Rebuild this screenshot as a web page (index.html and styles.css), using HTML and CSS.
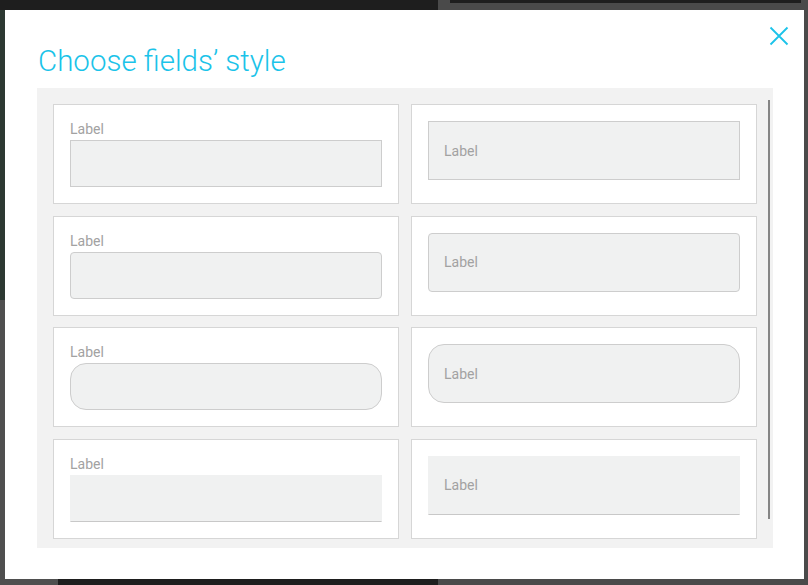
FILE: index.html
```html
<!DOCTYPE html>
<html lang="en">
<head>
<meta charset="utf-8">
<title>Choose fields’ style</title>
<link rel="stylesheet" href="styles.css">
</head>
<body>
<div class="dialog">
  <button class="close" aria-label="Close">
    <svg width="20" height="20" viewBox="0 0 20 20"><path d="M1.5 1.5 L18.5 18.5 M18.5 1.5 L1.5 18.5" stroke="#1bc3e9" stroke-width="1.8" fill="none"/></svg>
  </button>
  <h1 class="title">Choose fields’ style</h1>
  <div class="panel">
    <div class="grid">
      <div class="card"><div class="top-label">Label</div><div class="field f-square"></div></div>
      <div class="card"><div class="field tall f-square"><span class="in-label">Label</span></div></div>
      <div class="card"><div class="top-label">Label</div><div class="field f-rounded"></div></div>
      <div class="card"><div class="field tall f-rounded"><span class="in-label">Label</span></div></div>
      <div class="card"><div class="top-label">Label</div><div class="field f-pill"></div></div>
      <div class="card"><div class="field tall f-pill"><span class="in-label">Label</span></div></div>
      <div class="card"><div class="top-label">Label</div><div class="field f-line"></div></div>
      <div class="card"><div class="field tall f-line"><span class="in-label">Label</span></div></div>
    </div>
    <div class="scrollbar"></div>
  </div>
</div>
</body>
</html>
```
FILE: styles.css
```css
html, body {
  margin: 0;
  height: 100%;
}
body {
  box-sizing: border-box;
  padding: 10px 0 0 5px;
  font-family: Roboto, "Noto Sans", Arial, sans-serif;
  background:
    linear-gradient(#1e1e1e, #1e1e1e) 450px 0 / 351px 3px no-repeat,
    linear-gradient(#4a4a4a, #4a4a4a) 438px 0 / 370px 585px no-repeat,
    linear-gradient(#2d3932, #2d3932) 0 10px / 5px 290px no-repeat,
    linear-gradient(#4f4f4f, #4f4f4f) 0 300px / 58px 285px no-repeat,
    #1e1e1e;
  overflow: hidden;
}
.dialog {
  position: relative;
  box-sizing: border-box;
  width: 799px;
  height: 569px;
  background: #fff;
  padding: 34px 31px 31px 32px;
}
.close {
  position: absolute;
  top: 16px;
  right: 15px;
  width: 20px;
  height: 20px;
  padding: 0;
  border: 0;
  background: none;
  display: block;
}
.close svg { display: block; }
.title {
  margin: 0 0 10px 1px;
  font-size: 29.5px;
  line-height: 34px;
  font-weight: 300;
  color: #1bc3e9;
  letter-spacing: 0;
}
.panel {
  box-sizing: border-box;
  width: 736px;
  height: 460px;
  background: #f2f2f2;
  display: flex;
  padding: 16px 3px 11px 16px;
}
.grid {
  display: grid;
  grid-template-columns: 346px 346px;
  grid-auto-rows: 100px;
  column-gap: 12px;
  row-gap: 11.5px;
  width: 704px;
  flex: none;
}
.scrollbar {
  flex: none;
  width: 2px;
  height: 419px;
  margin: -4px 0 0 11px;
  background: #858585;
}
.card {
  box-sizing: border-box;
  background: #fff;
  border: 1px solid #d6d6d6;
  padding: 16px;
}
.top-label {
  font-size: 14px;
  line-height: 16px;
  color: #a2a2a2;
  margin-bottom: 3px;
}
.field {
  box-sizing: border-box;
  height: 47px;
  background: #f0f1f1;
  border: 1px solid #cdcdcd;
}
.field.tall {
  height: 59px;
  display: flex;
  align-items: center;
  padding: 0 0 0 15px;
}
.in-label {
  font-size: 14px;
  line-height: 16px;
  color: #a2a2a2;
}
.f-square { border-radius: 0; }
.f-rounded { border-radius: 4px; }
.f-pill { border-radius: 16px; }
.f-line {
  border-color: transparent transparent #c8c8c8 transparent;
}
```
